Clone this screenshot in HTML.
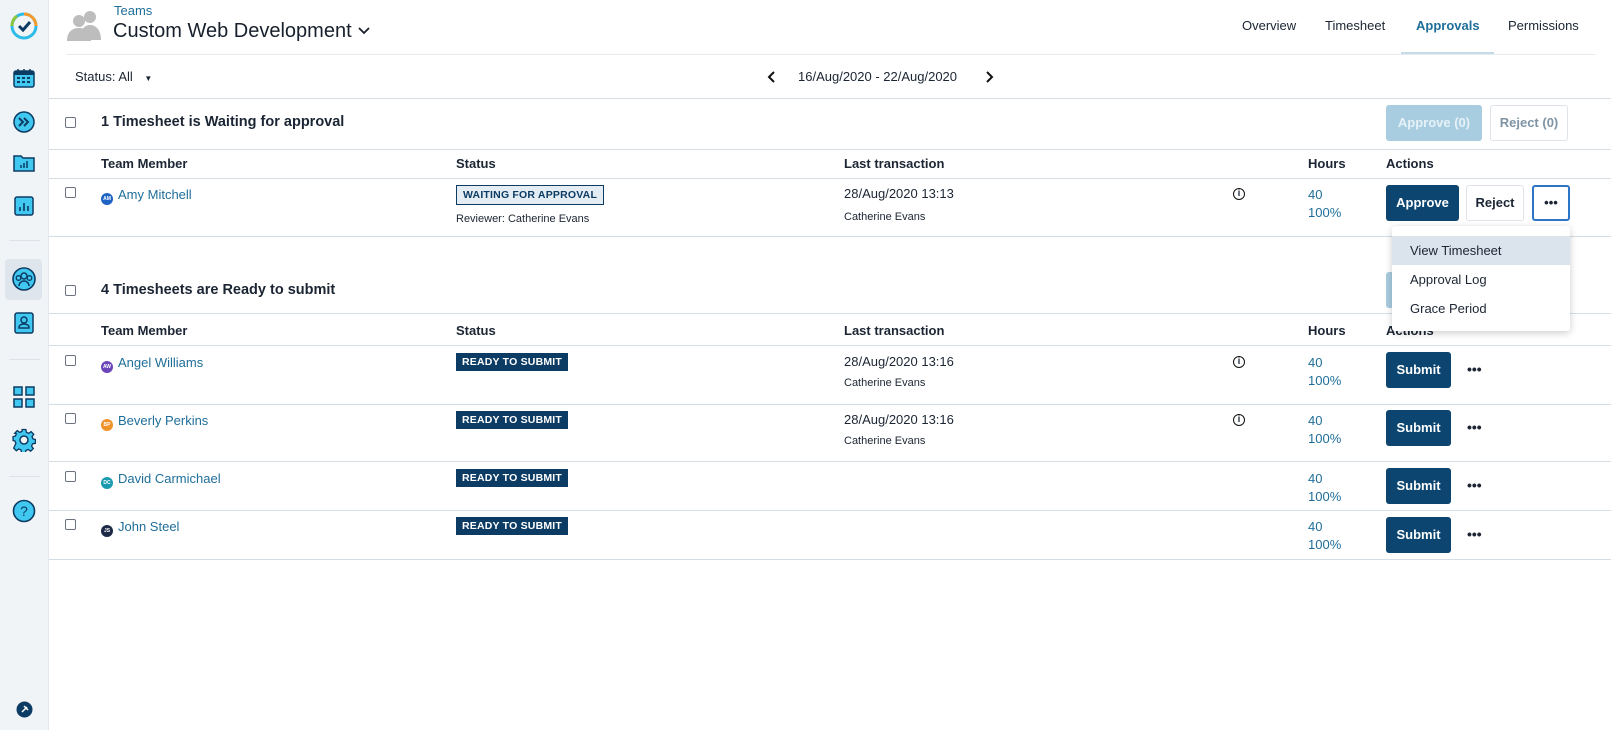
<!DOCTYPE html>
<html><head><meta charset="utf-8"><style>
*{box-sizing:border-box;margin:0;padding:0}
body{width:1611px;height:730px;overflow:hidden;background:#fff;font-family:"Liberation Sans",Arial,sans-serif;color:#1b2533;position:relative;font-size:13px}
.a{position:absolute;white-space:nowrap}
.side{position:absolute;left:0;top:0;width:49px;height:730px;background:#f1f4f7;border-right:1px solid #e3e8ee}
.hl{position:absolute;height:1px;background:#d5dde5}
.cb{position:absolute;width:11px;height:11px;border:1px solid #6b7280;border-radius:2px;background:#fff}
.b{font-weight:bold}
.link{color:#1f6e99}
.av{display:inline-block;width:12px;height:12px;border-radius:50%;vertical-align:-1px;margin-right:5px;color:#fff;font-size:5px;text-align:center;line-height:12px;font-weight:bold}
.tag{position:absolute;background:#0c3b63;color:#fff;font-weight:bold;font-size:10.5px;padding:3px 6px;letter-spacing:.2px}
.btn{position:absolute;border-radius:3px;font-weight:bold;font-size:13px;text-align:center}
.dk{background:#0c4570;color:#fff}
.dots{position:absolute;font-weight:bold;font-size:14px;letter-spacing:0}
.info{position:absolute;width:12px;height:12px;border:1.5px solid #111;border-radius:50%;font-size:9px;font-weight:bold;text-align:center;line-height:9px}
</style></head><body>
<div class="side">
<svg class="a" style="left:9px;top:11px" width="30" height="30" viewBox="0 0 30 30"><circle cx="15" cy="15" r="12" fill="none" stroke="#2dbbe8" stroke-width="3"/><path d="M15 3a12 12 0 0 1 12 12" fill="none" stroke="#f29a2e" stroke-width="3"/><path d="M3 15a12 12 0 0 1 5-10" fill="none" stroke="#8cc63f" stroke-width="3"/><path d="M10 15l4 4 7-8" fill="none" stroke="#0c3b63" stroke-width="3"/></svg>
<svg class="a" style="left:13px;top:68px" width="22" height="20"><rect x="1" y="3" width="20" height="16" rx="2" fill="#41c8f0" stroke="#0c3b63" stroke-width="1.5"/><rect x="1" y="3" width="20" height="4" fill="#0c3b63"/><path d="M5 1v4M11 1v4M17 1v4" stroke="#0c3b63" stroke-width="1.5"/><path d="M4 10h3M9 10h3M14 10h3M4 14h3M9 14h3M14 14h3" stroke="#0c3b63" stroke-width="2"/></svg>
<svg class="a" style="left:12px;top:110px" width="24" height="24"><circle cx="12" cy="12" r="10" fill="#41c8f0" stroke="#0c3b63" stroke-width="1.5"/><path d="M7 8l4 4-4 4M12 8l4 4-4 4" fill="none" stroke="#0c3b63" stroke-width="2"/></svg>
<svg class="a" style="left:13px;top:154px" width="22" height="18"><path d="M1 2h7l2 2h11v13H1z" fill="#41c8f0" stroke="#0c3b63" stroke-width="1.5"/><path d="M8 14v-3M11 14v-5M14 14v-7" stroke="#0c3b63" stroke-width="1.5"/></svg>
<svg class="a" style="left:14px;top:196px" width="20" height="20"><rect x="1" y="1" width="18" height="18" rx="2" fill="#41c8f0" stroke="#0c3b63" stroke-width="1.5"/><path d="M6 15v-4M10 15v-8M14 15v-5" stroke="#0c3b63" stroke-width="1.6"/></svg>
<div class="a" style="left:9px;top:240px;width:31px;height:1px;background:#dce2e8"></div>
<div class="a" style="left:5px;top:259px;width:37px;height:41px;background:#dfe5ec;border-radius:4px"></div>
<svg class="a" style="left:11px;top:266px" width="26" height="26"><circle cx="13" cy="13" r="11" fill="#41c8f0" stroke="#0c3b63" stroke-width="1.6"/><circle cx="13" cy="10" r="3" fill="none" stroke="#0c3b63" stroke-width="1.5"/><circle cx="7.5" cy="12" r="2.3" fill="none" stroke="#0c3b63" stroke-width="1.3"/><circle cx="18.5" cy="12" r="2.3" fill="none" stroke="#0c3b63" stroke-width="1.3"/><path d="M8 20a5 5 0 0 1 10 0" fill="none" stroke="#0c3b63" stroke-width="1.5"/></svg>
<svg class="a" style="left:14px;top:312px" width="20" height="22"><rect x="1" y="1" width="18" height="20" rx="2" fill="#41c8f0" stroke="#0c3b63" stroke-width="1.5"/><circle cx="10" cy="8" r="3" fill="none" stroke="#0c3b63" stroke-width="1.5"/><path d="M5 16h10v-1a5 3 0 0 0-10 0z" fill="none" stroke="#0c3b63" stroke-width="1.5"/></svg>
<div class="a" style="left:9px;top:359px;width:31px;height:1px;background:#dce2e8"></div>
<svg class="a" style="left:13px;top:386px" width="22" height="22"><g fill="#41c8f0" stroke="#0c3b63" stroke-width="1.5"><rect x="1" y="1" width="8" height="8"/><rect x="13" y="1" width="8" height="8"/><rect x="1" y="13" width="8" height="8"/><rect x="13" y="13" width="8" height="8"/></g></svg>
<svg class="a" style="left:12px;top:428px" width="24" height="24" viewBox="0 0 24 24"><path d="M10 1h4l.6 3 2.4 1 2.5-1.8 2.8 2.8L20.5 8.5l1 2.4 2.5.6v4l-3 .6-1 2.4 1.8 2.5-2.8 2.8-2.5-1.8-2.4 1-.6 2.5h-4l-.6-3-2.4-1-2.5 1.8-2.8-2.8L3.5 15.5l-1-2.4-2-.6v-4l2.5-.6 1-2.4L2.2 5l2.8-2.8L7.5 4l2.4-1z" fill="#41c8f0" stroke="#0c3b63" stroke-width="1.4" transform="scale(.95) translate(.6 .6)"/><circle cx="12" cy="12" r="4" fill="#f1f4f7" stroke="#0c3b63" stroke-width="1.5"/></svg>
<div class="a" style="left:9px;top:476px;width:31px;height:1px;background:#dce2e8"></div>
<svg class="a" style="left:12px;top:499px" width="24" height="24"><circle cx="12" cy="12" r="10.5" fill="#41c8f0" stroke="#0c3b63" stroke-width="1.6"/><text x="12" y="17" text-anchor="middle" font-family="Liberation Sans" font-size="14" fill="#0c3b63">?</text></svg>
<svg class="a" style="left:16px;top:701px" width="17" height="17"><circle cx="8.5" cy="8.5" r="8" fill="#0c3b63"/><path d="M6 11l5-5M8 5l4 4" stroke="#fff" stroke-width="1.5"/></svg>
</div>

<!-- header -->
<svg class="a" style="left:66px;top:10px" width="38" height="32"><g fill="#bdbdbd"><circle cx="24" cy="7" r="6"/><path d="M14 30c0-10 4-15 10-15s11 5 11 15z"/><circle cx="13" cy="11" r="6"/><path d="M1 31c0-9 5-13 12-13s12 4 12 13z"/></g></svg>
<div class="a link" style="left:114px;top:3px;font-size:13px">Teams</div>
<div class="a" style="left:113px;top:20px;font-size:20px;color:#17202c">Custom Web Development <svg width="14" height="10" style="vertical-align:1px"><path d="M2 2l5 5 5-5" fill="none" stroke="#17202c" stroke-width="1.8"/></svg></div>
<div class="a" style="left:1242px;top:18px">Overview</div>
<div class="a" style="left:1325px;top:18px">Timesheet</div>
<div class="a b" style="left:1416px;top:18px;color:#1f6e99">Approvals</div>
<div class="a" style="left:1508px;top:18px">Permissions</div>
<div class="a" style="left:1401px;top:52px;width:93px;height:3px;background:#c6dbe8"></div>
<div class="hl" style="left:66px;top:54px;width:1530px;background:#e7ecf0"></div>
<div class="a" style="left:75px;top:69px">Status: All <span style="font-size:8px;margin-left:8px">▼</span></div>
<svg class="a" style="left:766px;top:70px" width="10" height="14"><path d="M8 2L3 7l5 5" fill="none" stroke="#111" stroke-width="2"/></svg>
<div class="a" style="left:798px;top:69px">16/Aug/2020 - 22/Aug/2020</div>
<svg class="a" style="left:985px;top:70px" width="10" height="14"><path d="M2 2l5 5-5 5" fill="none" stroke="#111" stroke-width="2"/></svg>
<div class="hl" style="left:49px;top:98px;width:1562px"></div>

<!-- section 1 -->
<div class="cb" style="left:65px;top:117px"></div>
<div class="a b" style="left:101px;top:114px;font-size:14.5px">1 Timesheet is Waiting for approval</div>
<div class="btn" style="left:1386px;top:105px;width:96px;height:36px;line-height:36px;background:#a8cde0;color:#e6f2f8">Approve (0)</div>
<div class="btn" style="left:1490px;top:105px;width:78px;height:36px;line-height:34px;border:1px solid #dfe4ea;color:#7e93a3">Reject (0)</div>
<div class="hl" style="left:49px;top:149px;width:1562px"></div>
<div class="a b" style="left:101px;top:156px">Team Member</div>
<div class="a b" style="left:456px;top:156px">Status</div>
<div class="a b" style="left:844px;top:156px">Last transaction</div>
<div class="a b" style="left:1308px;top:156px">Hours</div>
<div class="a b" style="left:1386px;top:156px">Actions</div>
<div class="hl" style="left:49px;top:178px;width:1562px"></div>
<div class="cb" style="left:65px;top:187px"></div>
<div class="a link" style="left:101px;top:187px"><span class="av" style="background:#1e63c4">AM</span>Amy Mitchell</div>
<div class="a" style="left:456px;top:185px;border:1px solid #0c3b63;background:#e4edf4;color:#0c3b63;font-weight:bold;font-size:10.5px;padding:3px 6px;letter-spacing:.2px">WAITING FOR APPROVAL</div>
<div class="a" style="left:456px;top:213px;font-size:11px">Reviewer: Catherine Evans</div>
<div class="a" style="left:844px;top:186px">28/Aug/2020 13:13</div>
<div class="a" style="left:844px;top:211px;font-size:11px">Catherine Evans</div>
<div class="info" style="left:1233px;top:188px">i</div>
<div class="a link" style="left:1308px;top:186px;line-height:18px">40<br>100%</div>
<div class="btn dk" style="left:1386px;top:185px;width:73px;height:36px;line-height:36px">Approve</div>
<div class="btn" style="left:1466px;top:185px;width:58px;height:36px;line-height:34px;border:1px solid #dfe4ea">Reject</div>
<div class="btn" style="left:1532px;top:185px;width:38px;height:36px;line-height:31px;border:2px solid #2c75c7;font-size:13px">•••</div>
<div class="hl" style="left:49px;top:236px;width:1562px"></div>

<!-- section 2 -->
<div class="cb" style="left:65px;top:285px"></div>
<div class="a b" style="left:101px;top:282px;font-size:14.5px">4 Timesheets are Ready to submit</div>
<div class="btn" style="left:1386px;top:272px;width:96px;height:36px;background:#a8cde0"></div>
<div class="hl" style="left:49px;top:313px;width:1562px"></div>
<div class="a b" style="left:101px;top:323px">Team Member</div>
<div class="a b" style="left:456px;top:323px">Status</div>
<div class="a b" style="left:844px;top:323px">Last transaction</div>
<div class="a b" style="left:1308px;top:323px">Hours</div>
<div class="a b" style="left:1386px;top:323px">Actions</div>
<div class="hl" style="left:49px;top:345px;width:1562px"></div>

<div class="cb" style="left:65px;top:355px"></div>
<div class="a link" style="left:101px;top:355px"><span class="av" style="background:#6c45b8">AW</span>Angel Williams</div>
<div class="tag" style="left:456px;top:353px">READY TO SUBMIT</div>
<div class="a" style="left:844px;top:354px">28/Aug/2020 13:16</div>
<div class="a" style="left:844px;top:377px;font-size:11px">Catherine Evans</div>
<div class="info" style="left:1233px;top:356px">i</div>
<div class="a link" style="left:1308px;top:354px;line-height:18px">40<br>100%</div>
<div class="btn dk" style="left:1386px;top:352px;width:65px;height:36px;line-height:36px">Submit</div>
<div class="dots" style="left:1467px;top:361px">•••</div>
<div class="hl" style="left:49px;top:404px;width:1562px"></div>

<div class="cb" style="left:65px;top:413px"></div>
<div class="a link" style="left:101px;top:413px"><span class="av" style="background:#f0922a">BP</span>Beverly Perkins</div>
<div class="tag" style="left:456px;top:411px">READY TO SUBMIT</div>
<div class="a" style="left:844px;top:412px">28/Aug/2020 13:16</div>
<div class="a" style="left:844px;top:435px;font-size:11px">Catherine Evans</div>
<div class="info" style="left:1233px;top:414px">i</div>
<div class="a link" style="left:1308px;top:412px;line-height:18px">40<br>100%</div>
<div class="btn dk" style="left:1386px;top:410px;width:65px;height:36px;line-height:36px">Submit</div>
<div class="dots" style="left:1467px;top:419px">•••</div>
<div class="hl" style="left:49px;top:461px;width:1562px"></div>

<div class="cb" style="left:65px;top:471px"></div>
<div class="a link" style="left:101px;top:471px"><span class="av" style="background:#1b9bb0">DC</span>David Carmichael</div>
<div class="tag" style="left:456px;top:469px">READY TO SUBMIT</div>
<div class="a link" style="left:1308px;top:470px;line-height:18px">40<br>100%</div>
<div class="btn dk" style="left:1386px;top:468px;width:65px;height:36px;line-height:36px">Submit</div>
<div class="dots" style="left:1467px;top:477px">•••</div>
<div class="hl" style="left:49px;top:510px;width:1562px"></div>

<div class="cb" style="left:65px;top:519px"></div>
<div class="a link" style="left:101px;top:519px"><span class="av" style="background:#1c2a45">JS</span>John Steel</div>
<div class="tag" style="left:456px;top:517px">READY TO SUBMIT</div>
<div class="a link" style="left:1308px;top:518px;line-height:18px">40<br>100%</div>
<div class="btn dk" style="left:1386px;top:517px;width:65px;height:36px;line-height:36px">Submit</div>
<div class="dots" style="left:1467px;top:526px">•••</div>
<div class="hl" style="left:49px;top:559px;width:1562px"></div>

<!-- dropdown -->
<div class="a" style="left:1392px;top:226px;width:178px;height:105px;background:#fff;border-radius:3px;box-shadow:0 2px 8px rgba(0,0,0,.2)">
<div style="margin-top:10px;height:29px;background:#dbe4ec;padding-left:18px;line-height:29px">View Timesheet</div>
<div style="height:29px;padding-left:18px;line-height:29px">Approval Log</div>
<div style="height:29px;padding-left:18px;line-height:29px">Grace Period</div>
</div>
</body></html>
